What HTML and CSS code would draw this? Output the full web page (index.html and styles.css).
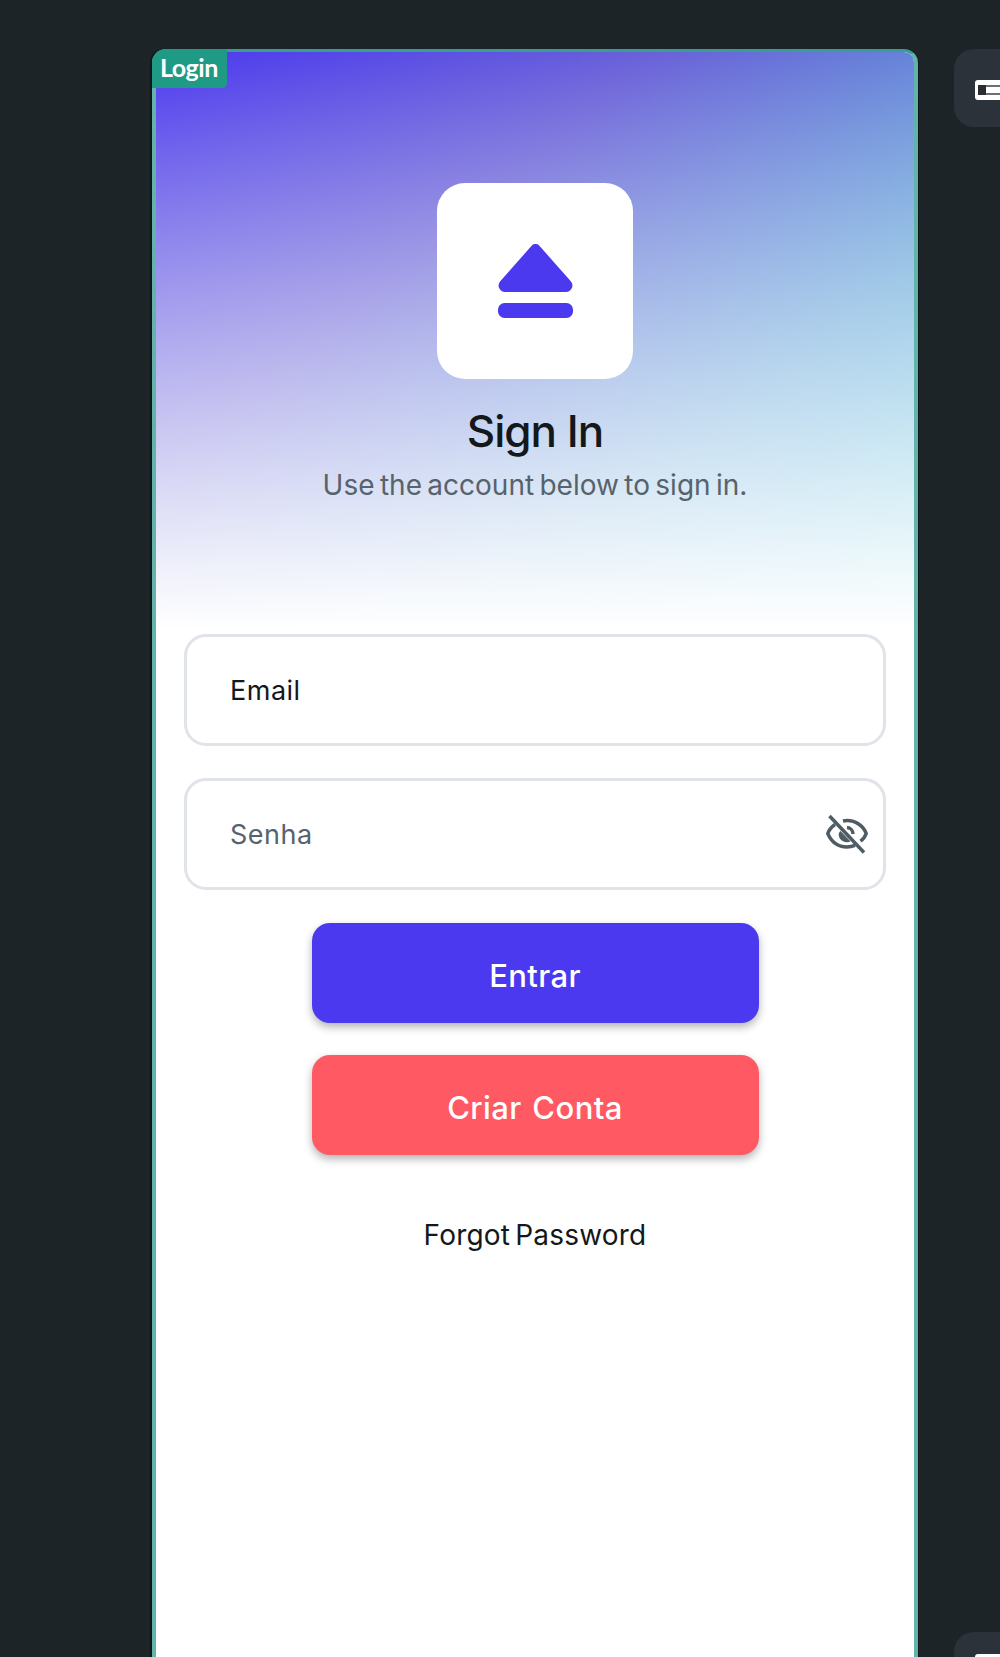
FILE: index.html
```html
<!DOCTYPE html>
<html lang="en">
  <head>
    <meta charset="UTF-8" />
    <title>Login</title>
    <link rel="stylesheet" href="styles.css">
  </head>
  <body>
    <div class="page">
      <div class="card">
        <span class="tag">Login</span>
        <div class="header">
          <div class="logo">
            <svg class="logo-icon" viewBox="0 0 75 74" width="75" height="74">
              <path d="M33.6 1.8a5 5 0 0 1 7.8 0L73 37.500a6.500 6.500 0 0 1-5 10.500H7a6.500 6.500 0 0 1-5-10.500z" />
              <rect x="0" y="59" width="75" height="15" rx="6.500" />
            </svg>
          </div>
          <h2>Sign In</h2>
          <p class="subtitle">Use the account below to sign in.</p>
        </div>
        <div class="form">
          <div class="field">Email</div>
          <div class="field field-password">
            <span>Senha</span>
            <svg class="eye" viewBox="0 0 42 40" width="42" height="40">
              <path d="M9 10.500C5.500 13 2.800 16.500 1.800 19.500 5 27.500 12 33 21 33c3 0 5.500-.6 8-1.600" />
              <path d="M17 7c1.300-.3 2.700-.5 4-.5 9 0 16.500 5.500 19.200 13-1 3-3 5.700-5.700 7.700" />
              <path d="M21 13.500a6.500 6.500 0 0 1 6 6.500" />
              <path class="pupil" d="M14.500 17l10 10.500c-1 .5-2.300.8-3.500.8-5 0-8.300-3.800-8.300-8 0-1.300.8-2.300 1.800-3.300z" />
              <path d="M3.500 2l34.500 36.500" />
            </svg>
          </div>
          <button class="btn btn-primary" type="button">Entrar</button>
          <button class="btn btn-danger" type="button">Criar Conta</button>
          <a class="forgot" href="#">Forgot Password</a>
        </div>
      </div>
      <div class="rail">
        <div class="tile"><span class="tile-glyph"><i></i></span></div>
        <div class="tile tile-low"><span class="tile-glyph"><i></i></span></div>
      </div>
    </div>
  </body>
</html>
```

FILE: styles.css
```css
html,
body {
  margin: 0;
  height: 100%;
  overflow: hidden;
}

body {
  font-family: Inter, "Noto Sans", sans-serif;
  background: #1d2428;
}

.page {
  display: flex;
  align-items: flex-start;
  gap: 36px;
  height: 1657px;
  padding: 49px 0 0 152px;
  box-sizing: border-box;
  overflow: hidden;
}

.card {
  position: relative;
  flex: 0 0 766px;
  height: 1640px;
  box-sizing: border-box;
  background: white;
  border: 4px solid #63b3ab;
  border-top: 3px solid #3a9c96;
  border-bottom: 0;
  border-radius: 14px 14px 0 0;
  box-shadow: -2px 0 0 #11161a, 1px 0 0 #11161a;
}

.tag {
  position: absolute;
  top: -3px;
  left: -4px;
  padding: 4px 9px 6px 8px;
  background: #1f9a85;
  color: white;
  font-family: Lato, sans-serif;
  font-size: 25px;
  font-weight: 700;
  line-height: 29px;
  letter-spacing: -0.5px;
  border-radius: 14px 0 5px 0;
}

.header {
  display: flex;
  flex-direction: column;
  align-items: center;
  height: 577px;
  box-sizing: border-box;
  padding-top: 131px;
  border-radius: 10px 10px 0 0;
  background:
    linear-gradient(to bottom, rgba(255, 255, 255, 0), #fff),
    linear-gradient(140deg, #4b39ef 0%, #6a62d8 35%, #62a4d8 70%, #5cc8e0 100%);
}

.logo {
  display: flex;
  align-items: center;
  justify-content: center;
  width: 196px;
  height: 196px;
  background: white;
  border-radius: 28px;
}

.logo-icon {
  fill: #4b39ef;
}

h2 {
  margin: 24px 0 0;
  font-size: 44px;
  font-weight: 500;
  line-height: 56px;
  color: #14181b;
  letter-spacing: -1px;
}

.subtitle {
  margin: 8px 0 0;
  font-size: 28px;
  line-height: 36px;
  color: #57636c;
  word-spacing: -2.5px;
}

.form {
  display: flex;
  flex-direction: column;
  align-items: center;
  padding: 5px 28px 0;
}

.field {
  display: flex;
  align-items: center;
  justify-content: space-between;
  align-self: stretch;
  height: 112px;
  box-sizing: border-box;
  margin-bottom: 32px;
  padding: 0 15px 0 43px;
  background: white;
  border: 3px solid #e0e3e7;
  border-radius: 22px;
  font-size: 27px;
  letter-spacing: 0.5px;
  color: #14181b;
}

.field-password {
  margin-bottom: 33px;
  color: #57636c;
}

.eye {
  fill: none;
  stroke: #4f5c64;
  stroke-width: 3.500;
}

.eye .pupil {
  fill: #4f5c64;
  stroke: none;
}

.btn {
  width: 447px;
  height: 100px;
  margin-bottom: 32px;
  padding-top: 6px;
  border: none;
  border-radius: 18px;
  color: white;
  font-family: inherit;
  font-size: 31px;
  font-weight: 500;
  letter-spacing: 0.4px;
  word-spacing: 2px;
  box-shadow: 0 4px 8px rgba(0, 0, 0, 0.3);
}

.btn-primary {
  background: #4b39ef;
}

.btn-danger {
  background: #ff5963;
}

.forgot {
  margin-top: 30px;
  font-size: 28px;
  line-height: 36px;
  color: #14181b;
  text-decoration: none;
  letter-spacing: 0.2px;
  word-spacing: -3px;
}

.rail {
  display: flex;
  flex-direction: column;
  flex-shrink: 0;
  gap: 1505px;
}

.tile {
  display: flex;
  align-items: flex-start;
  width: 78px;
  height: 78px;
  box-sizing: border-box;
  padding: 31px 0 0 21px;
  background: #2c323a;
  border-radius: 20px;
}

.tile-low {
  padding-top: 22px;
}

.tile-glyph {
  display: block;
  width: 40px;
  height: 20px;
  box-sizing: border-box;
  padding: 5px 3px;
  background: white;
  border-radius: 3px;
}

.tile-glyph i {
  display: block;
  height: 10px;
  background:
    linear-gradient(to right, #2a2e32 8px, transparent 8px),
    linear-gradient(to bottom, #6b7075 2px, #fff 2px, #fff 8px, #6b7075 8px);
}
```
